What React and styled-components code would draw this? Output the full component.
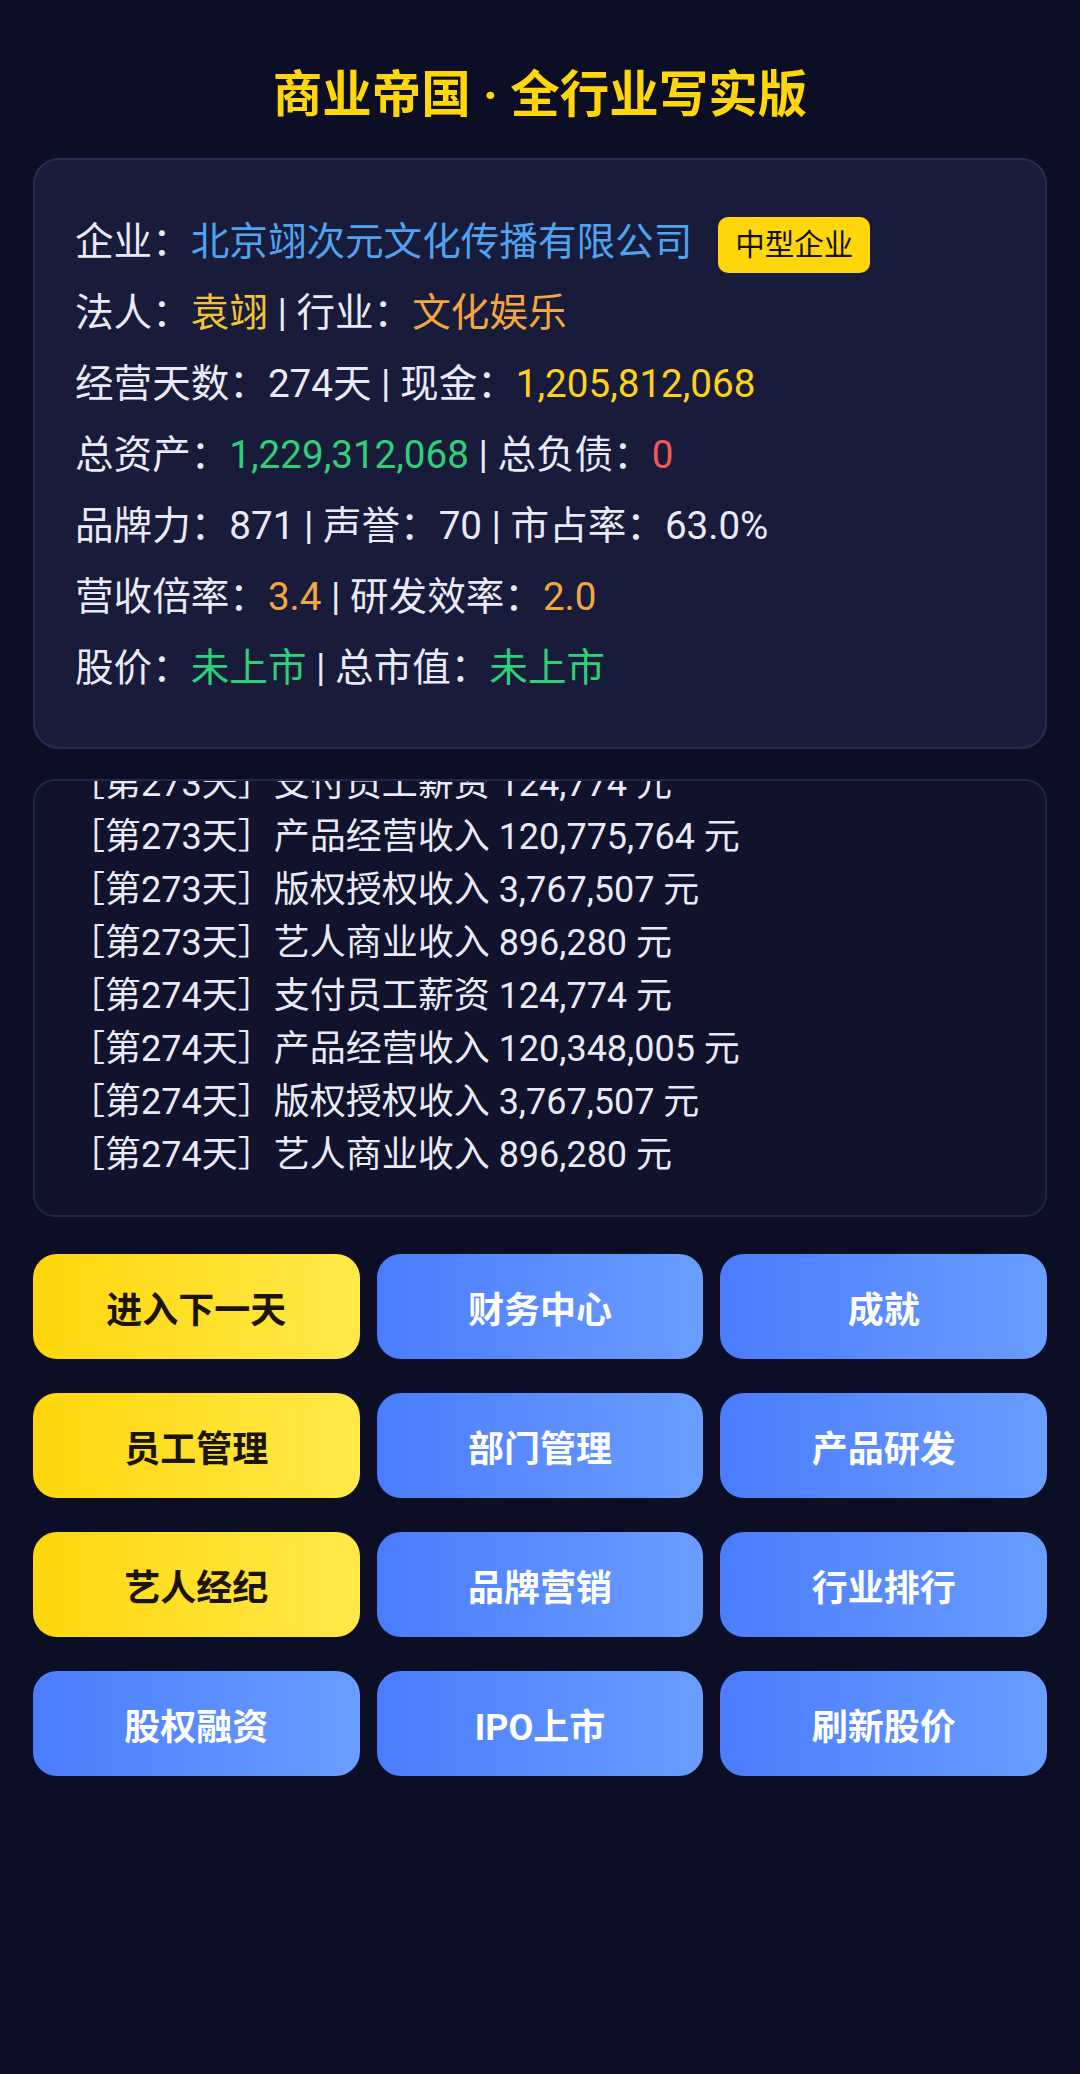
import React from 'react'
import styled, { createGlobalStyle } from 'styled-components'

const GlobalStyle = createGlobalStyle`
  html, body {
    margin: 0;
    padding: 0;
    background: #0b0e24;
  }
  body {
    font-family: Roboto, "Noto Sans CJK SC", sans-serif;
    color: #e8eaf6;
  }
`

const Page = styled.div`
  min-height: 2074px;
  padding: 0 33px;
  box-sizing: border-box;
  background: #0b0e24;
`

const Title = styled.h1`
  margin: 0;
  padding: 64px 0 32px;
  font-size: 49.5px;
  line-height: 62px;
  font-weight: 700;
  color: #ffd60a;
  text-align: center;
`

const InfoCard = styled.section`
  background: #181c3a;
  border: 2px solid #262b50;
  border-radius: 26px;
  padding: 46px 40px 44px;
  font-size: 38.6px;
  line-height: 71px;
`

const Line = styled.div`
  white-space: nowrap;
`

const Val = styled.span`
  color: ${p => p.$c || 'inherit'};
`

const Badge = styled.span`
  display: inline-block;
  margin-left: 26px;
  padding: 0 17px;
  height: 56px;
  line-height: 56px;
  font-size: 29.5px;
  color: #111;
  background: #ffd60a;
  border-radius: 10px;
  vertical-align: middle;
`

const LogBox = styled.section`
  margin-top: 30px;
  height: 438px;
  box-sizing: border-box;
  background: #10132b;
  border: 2px solid #22264a;
  border-radius: 22px;
  padding: 0 30px 33px 34px;
  overflow: hidden;
  display: flex;
  flex-direction: column;
  justify-content: flex-end;
  font-size: 36px;
  line-height: 53px;
`

const LogLine = styled.div`
  white-space: nowrap;
  flex-shrink: 0;
`

const Actions = styled.div`
  margin-top: 37px;
  display: grid;
  grid-template-columns: repeat(3, 1fr);
  column-gap: 17px;
  row-gap: 34px;
`

const Btn = styled.button`
  height: 105px;
  border: none;
  border-radius: 24px;
  font-family: Roboto, "Noto Sans CJK SC", sans-serif;
  font-size: 36px;
  font-weight: 700;
  color: ${p => (p.$gold ? '#1a1508' : '#ffffff')};
  background: ${p =>
    p.$gold
      ? 'linear-gradient(90deg, #ffd60a 0%, #ffe94a 100%)'
      : 'linear-gradient(90deg, #4a7cff 0%, #6a9dff 100%)'};
  cursor: pointer;
`

const logs = [
  '［第272天］版权授权收入 3,767,507 元',
  '［第272天］艺人商业收入 896,280 元',
  '［第273天］支付员工薪资 124,774 元',
  '［第273天］产品经营收入 120,775,764 元',
  '［第273天］版权授权收入 3,767,507 元',
  '［第273天］艺人商业收入 896,280 元',
  '［第274天］支付员工薪资 124,774 元',
  '［第274天］产品经营收入 120,348,005 元',
  '［第274天］版权授权收入 3,767,507 元',
  '［第274天］艺人商业收入 896,280 元',
]

const buttons = [
  ['进入下一天', true],
  ['财务中心'],
  ['成就'],
  ['员工管理', true],
  ['部门管理'],
  ['产品研发'],
  ['艺人经纪', true],
  ['品牌营销'],
  ['行业排行'],
  ['股权融资'],
  ['IPO上市'],
  ['刷新股价'],
]

export default function App() {
  return (
    <Page>
      <GlobalStyle />
      <Title>商业帝国 · 全行业写实版</Title>

      <InfoCard>
        <Line>
          企业：<Val $c="#4fa3f0">北京翊次元文化传播有限公司</Val>
          <Badge>中型企业</Badge>
        </Line>
        <Line>
          法人：<Val $c="#f2c630">袁翊</Val> | 行业：<Val $c="#f4a63f">文化娱乐</Val>
        </Line>
        <Line>
          经营天数：274天 | 现金：<Val $c="#ffd21a">1,205,812,068</Val>
        </Line>
        <Line>
          总资产：<Val $c="#2fd077">1,229,312,068</Val> | 总负债：<Val $c="#ef5b5b">0</Val>
        </Line>
        <Line>品牌力：871 | 声誉：70 | 市占率：63.0%</Line>
        <Line>
          营收倍率：<Val $c="#f4a63f">3.4</Val> | 研发效率：<Val $c="#f4a63f">2.0</Val>
        </Line>
        <Line>
          股价：<Val $c="#2fd077">未上市</Val> | 总市值：<Val $c="#2fd077">未上市</Val>
        </Line>
      </InfoCard>

      <LogBox>
        {logs.map((l, i) => (
          <LogLine key={i}>{l}</LogLine>
        ))}
      </LogBox>

      <Actions>
        {buttons.map(([label, gold]) => (
          <Btn key={label} $gold={gold}>
            {label}
          </Btn>
        ))}
      </Actions>
    </Page>
  )
}
